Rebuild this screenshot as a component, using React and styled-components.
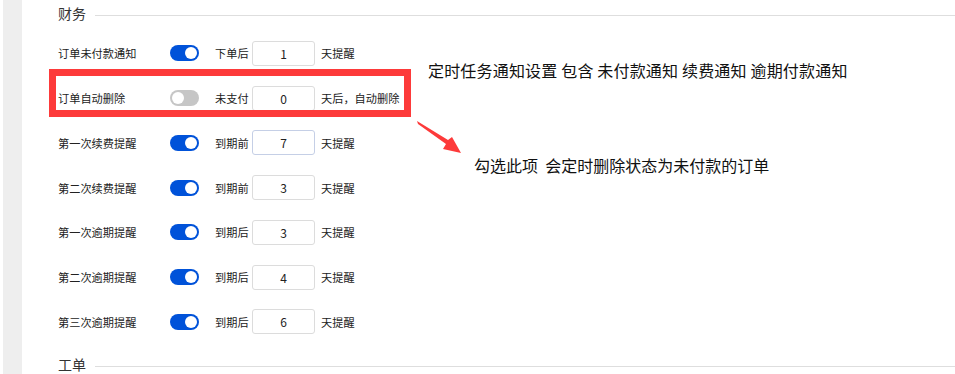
import React from "react";
import styled, { createGlobalStyle } from "styled-components";

const GlobalStyle = createGlobalStyle`
  html, body {
    margin: 0;
    padding: 0;
    background: #ffffff;
  }
  body {
    font-family: "Noto Sans CJK SC", "Noto Sans", sans-serif;
    color: #222;
  }
`;

const Page = styled.div`
  position: relative;
  display: flex;
  width: 955px;
  height: 374px;
  overflow: hidden;
  background: #fff;
`;

const Gutter = styled.div`
  width: 19px;
  margin-left: 3px;
  background: #eeeeee;
  flex-shrink: 0;
`;

const Content = styled.div`
  flex: 1;
  padding-left: 36px;
  display: flex;
  flex-direction: column;
`;

const SectionHead = styled.div`
  display: flex;
  align-items: center;
  gap: 9px;
  height: 26px;
  margin-top: ${(p) => p.$top || 0}px;
`;

const SectionTitle = styled.span`
  font-size: 14px;
  line-height: 26px;
  color: #333;
`;

const SectionLine = styled.div`
  flex: 1;
  border-top: 1px solid #dedede;
  margin-top: 4px;
`;

const Rows = styled.div`
  display: flex;
  flex-direction: column;
  margin-top: 5px;
`;

const Row = styled.div`
  display: flex;
  align-items: center;
  height: 44.75px;
  font-size: 11.2px;
  color: #222;
`;

const Label = styled.span`
  width: 112px;
  flex-shrink: 0;
`;

const Switch = styled.span`
  position: relative;
  width: 29px;
  height: 16px;
  border-radius: 8px;
  background: ${(p) => (p.$on ? "#0052d9" : "#c6c6c6")};
  flex-shrink: 0;
  margin-right: 16px;

  &::after {
    content: "";
    position: absolute;
    top: 2px;
    left: ${(p) => (p.$on ? "15px" : "2px")};
    width: 12px;
    height: 12px;
    border-radius: 50%;
    background: #fff;
  }
`;

const Prefix = styled.span`
  width: 37px;
  flex-shrink: 0;
`;

const NumBox = styled.div`
  width: 63px;
  height: 25px;
  box-sizing: border-box;
  border: 1px solid ${(p) => (p.$focus ? "#c5cfe6" : "#dcdcdc")};
  border-radius: 3px;
  display: flex;
  align-items: center;
  justify-content: center;
  font-size: 12px;
  color: #222;
  margin-right: 6px;
  flex-shrink: 0;
`;

const Suffix = styled.span``;

const RedFrame = styled.div`
  position: absolute;
  left: 49px;
  top: 69px;
  width: 362px;
  height: 48px;
  box-sizing: border-box;
  border: 7px solid #fd3a3a;
`;

const Note = styled.div`
  position: absolute;
  left: ${(p) => p.$x}px;
  top: ${(p) => p.$y}px;
  font-size: 16px;
  line-height: 20px;
  letter-spacing: ${(p) => p.$spacing || 0}px;
  color: #111;
  white-space: pre;
`;

const Arrow = styled.svg`
  position: absolute;
  left: 0;
  top: 0;
  pointer-events: none;
`;

const rows = [
  { label: "订单未付款通知", on: true, pre: "下单后", val: "1", post: "天提醒" },
  { label: "订单自动删除", on: false, pre: "未支付", val: "0", post: "天后，自动删除" },
  { label: "第一次续费提醒", on: true, pre: "到期前", val: "7", post: "天提醒", focus: true },
  { label: "第二次续费提醒", on: true, pre: "到期前", val: "3", post: "天提醒" },
  { label: "第一次逾期提醒", on: true, pre: "到期后", val: "3", post: "天提醒" },
  { label: "第二次逾期提醒", on: true, pre: "到期后", val: "4", post: "天提醒" },
  { label: "第三次逾期提醒", on: true, pre: "到期后", val: "6", post: "天提醒" },
];

export default function App() {
  return (
    <>
      <GlobalStyle />
      <Page>
        <Gutter />
        <Content>
          <SectionHead>
            <SectionTitle>财务</SectionTitle>
            <SectionLine />
          </SectionHead>
          <Rows>
            {rows.map((r) => (
              <Row key={r.label}>
                <Label>{r.label}</Label>
                <Switch $on={r.on} />
                <Prefix>{r.pre}</Prefix>
                <NumBox $focus={r.focus}>{r.val}</NumBox>
                <Suffix>{r.post}</Suffix>
              </Row>
            ))}
          </Rows>
          <SectionHead $top={7}>
            <SectionTitle>工单</SectionTitle>
            <SectionLine />
          </SectionHead>
        </Content>

        <RedFrame />
        <Note $x={428} $y={60} $spacing={0.18}>
          定时任务通知设置 包含 未付款通知 续费通知 逾期付款通知
        </Note>
        <Arrow width="955" height="374" viewBox="0 0 955 374">
          <polygon
            points="417,121 448,140 452,137 461,153 443,149 446,144 418,124"
            fill="#fd3a3a"
          />
        </Arrow>
        <Note $x={474} $y={155}>{"勾选此项  会定时删除状态为未付款的订单"}</Note>
      </Page>
    </>
  );
}
